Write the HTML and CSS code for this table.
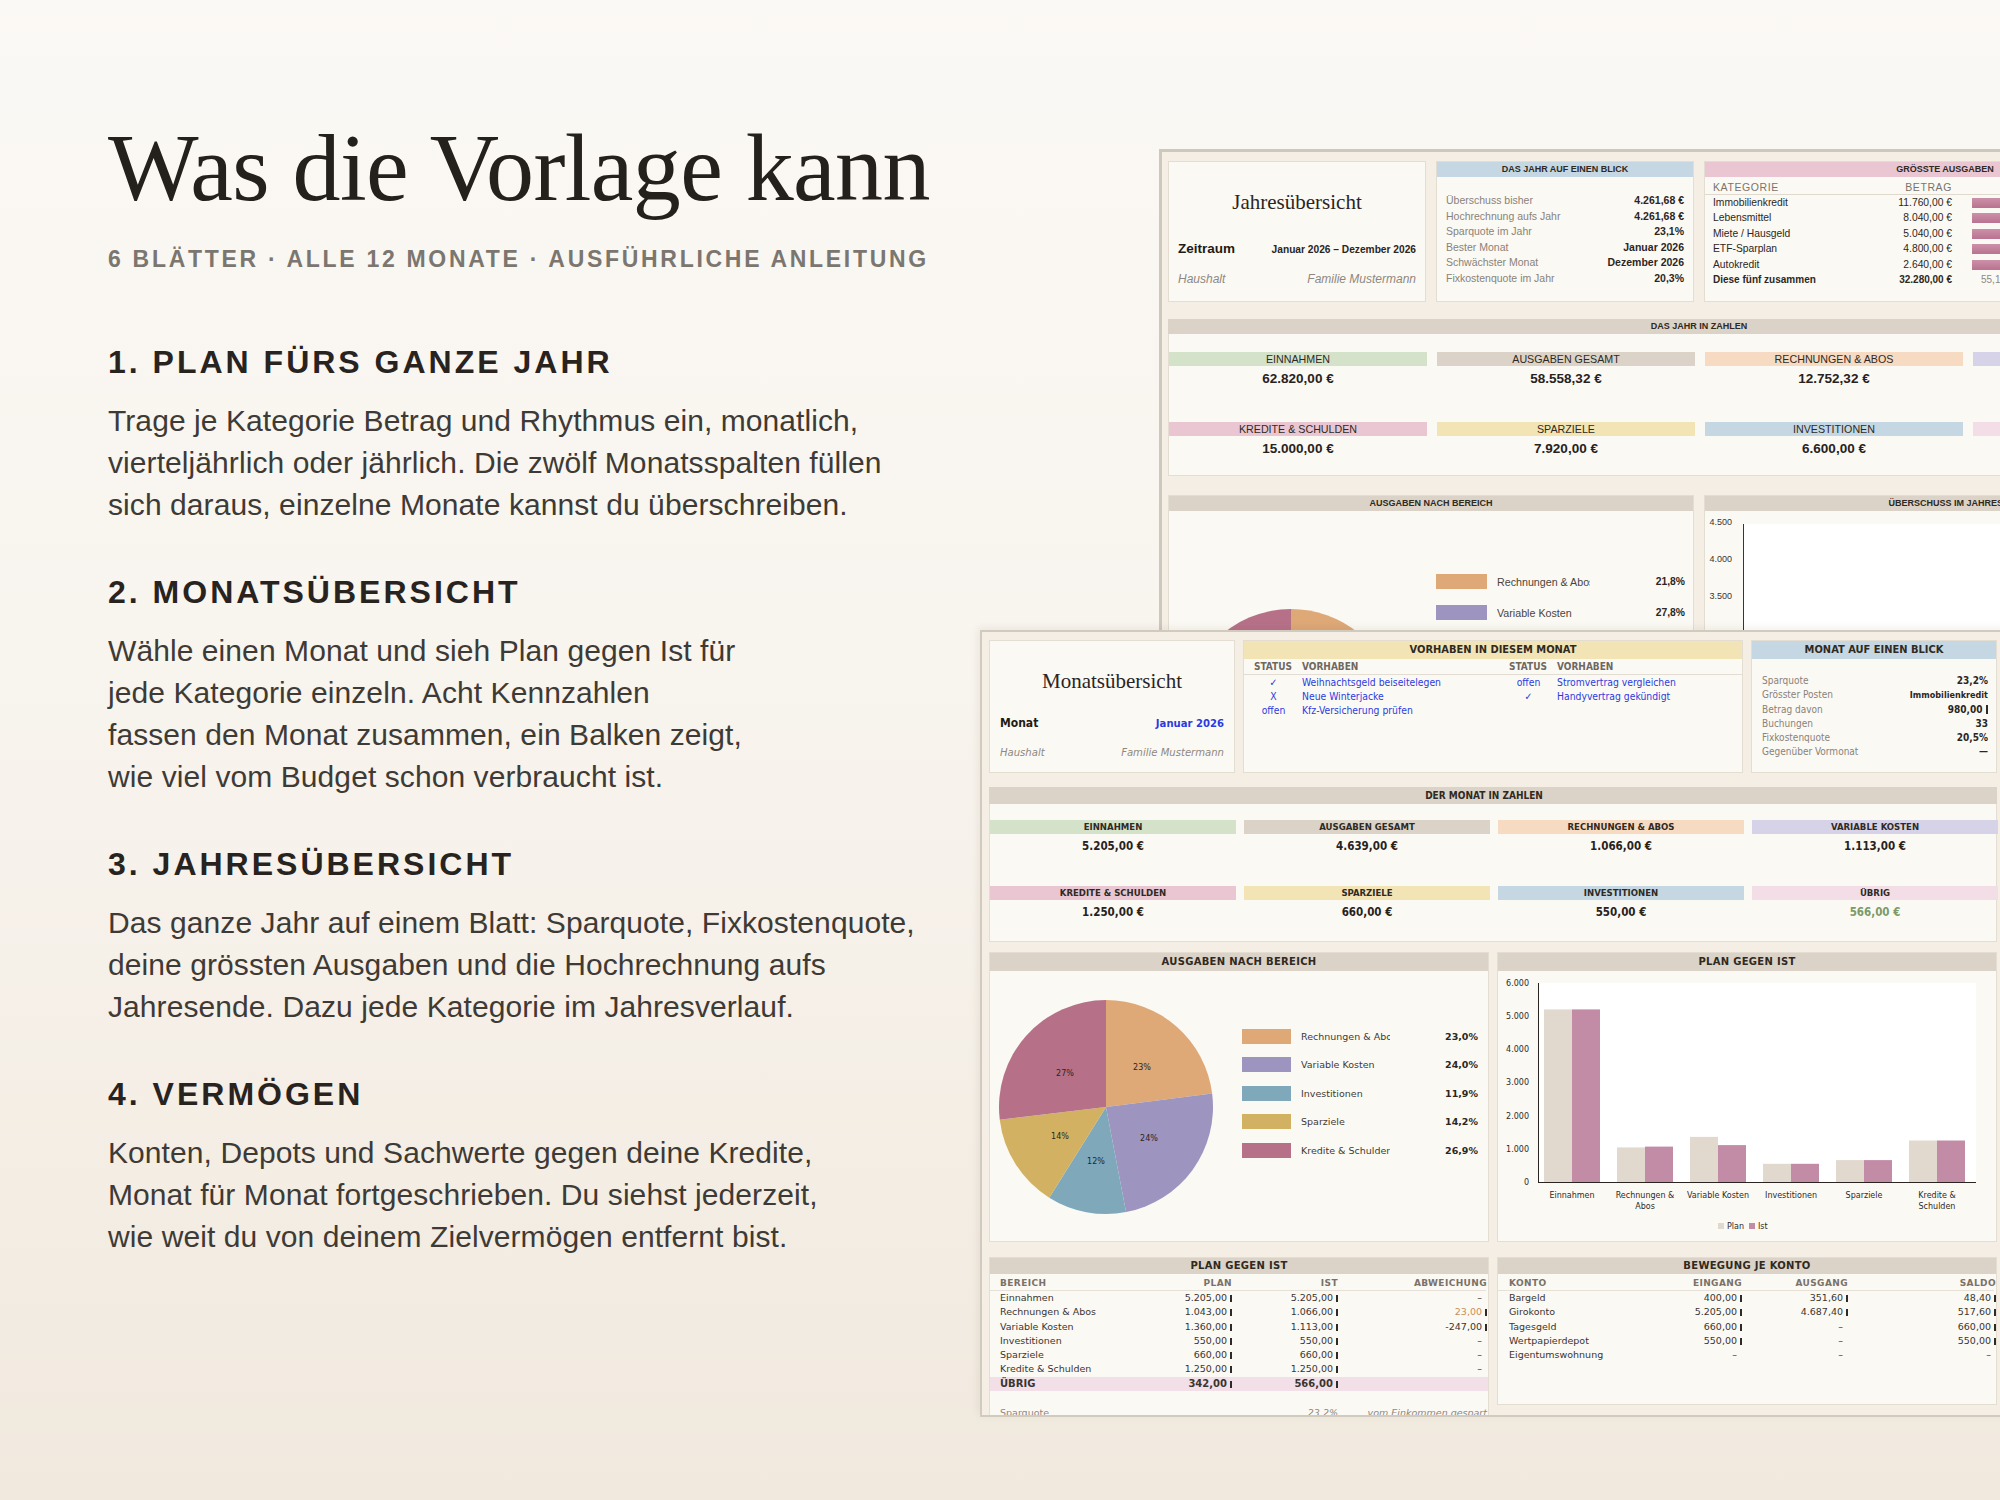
FILE: index.html
```html
<!DOCTYPE html>
<html lang="de">
<head>
<meta charset="utf-8">
<title>Was die Vorlage kann</title>
<link rel="stylesheet" href="styles.css">
</head>
<body>
<div class="page">
  <section class="intro">
    <h1 class="title">Was die Vorlage kann</h1>
    <p class="kicker">6 BLÄTTER · ALLE 12 MONATE · AUSFÜHRLICHE ANLEITUNG</p>
    <div class="feature first">
      <h2>1. PLAN FÜRS GANZE JAHR</h2>
      <p>Trage je Kategorie Betrag und Rhythmus ein, monatlich,<br>vierteljährlich oder jährlich. Die zwölf Monatsspalten füllen<br>sich daraus, einzelne Monate kannst du überschreiben.</p>
    </div>
    <div class="feature">
      <h2>2. MONATSÜBERSICHT</h2>
      <p>Wähle einen Monat und sieh Plan gegen Ist für<br>jede Kategorie einzeln. Acht Kennzahlen<br>fassen den Monat zusammen, ein Balken zeigt,<br>wie viel vom Budget schon verbraucht ist.</p>
    </div>
    <div class="feature">
      <h2>3. JAHRESÜBERSICHT</h2>
      <p>Das ganze Jahr auf einem Blatt: Sparquote, Fixkostenquote,<br>deine grössten Ausgaben und die Hochrechnung aufs<br>Jahresende. Dazu jede Kategorie im Jahresverlauf.</p>
    </div>
    <div class="feature">
      <h2>4. VERMÖGEN</h2>
      <p>Konten, Depots und Sachwerte gegen deine Kredite,<br>Monat für Monat fortgeschrieben. Du siehst jederzeit,<br>wie weit du von deinem Zielvermögen entfernt bist.</p>
    </div>
  </section>

  <!-- Jahresübersicht (back sheet) -->
  <div class="sheet sheet-back">
    <div class="b-top">
      <div class="panel tcard">
        <div class="tname">Jahresübersicht</div>
        <div class="trow main"><span class="tkey">Zeitraum</span><span class="tval">Januar 2026 – Dezember 2026</span></div>
        <div class="trow sub"><span>Haushalt</span><span>Familie Mustermann</span></div>
      </div>
      <div class="panel">
        <div class="phead bh c-blue"><span>DAS JAHR AUF EINEN BLICK</span></div>
        <div class="bkv">
          <div class="kvr"><span>Überschuss bisher</span><b>4.261,68 €</b></div>
          <div class="kvr"><span>Hochrechnung aufs Jahr</span><b>4.261,68 €</b></div>
          <div class="kvr"><span>Sparquote im Jahr</span><b>23,1%</b></div>
          <div class="kvr"><span>Bester Monat</span><b>Januar 2026</b></div>
          <div class="kvr"><span>Schwächster Monat</span><b>Dezember 2026</b></div>
          <div class="kvr"><span>Fixkostenquote im Jahr</span><b>20,3%</b></div>
        </div>
      </div>
      <div class="panel">
        <div class="phead bh c-pink"><span>GRÖSSTE AUSGABEN</span></div>
        <div class="gtab">
          <div class="grow ghead"><span>KATEGORIE</span><span class="r">BETRAG</span><span></span></div>
          <div class="grow"><span>Immobilienkredit</span><span class="r">11.760,00 €</span><span class="gbar"><i class="g1"></i></span></div>
          <div class="grow"><span>Lebensmittel</span><span class="r">8.040,00 €</span><span class="gbar"><i class="g2"></i></span></div>
          <div class="grow"><span>Miete / Hausgeld</span><span class="r">5.040,00 €</span><span class="gbar"><i class="g3"></i></span></div>
          <div class="grow"><span>ETF-Sparplan</span><span class="r">4.800,00 €</span><span class="gbar"><i class="g4"></i></span></div>
          <div class="grow"><span>Autokredit</span><span class="r">2.640,00 €</span><span class="gbar"><i class="g5"></i></span></div>
          <div class="grow total"><span>Diese fünf zusammen</span><span class="r">32.280,00 €</span><span class="gpct">55,1</span></div>
        </div>
      </div>
    </div>

    <div class="b-z">
      <div class="phead bh c-grey"><span>DAS JAHR IN ZAHLEN</span></div>
      <div class="zbody">
        <div class="kpi"><div class="lab c-green"><span>EINNAHMEN</span></div><div class="val"><span>62.820,00 €</span></div></div>
        <div class="kpi"><div class="lab c-grey"><span>AUSGABEN GESAMT</span></div><div class="val"><span>58.558,32 €</span></div></div>
        <div class="kpi"><div class="lab c-peach"><span>RECHNUNGEN &amp; ABOS</span></div><div class="val"><span>12.752,32 €</span></div></div>
        <div class="kpi"><div class="lab c-lav"></div><div class="val"></div></div>
        <div class="kpi"><div class="lab c-pink"><span>KREDITE &amp; SCHULDEN</span></div><div class="val"><span>15.000,00 €</span></div></div>
        <div class="kpi"><div class="lab c-yellow"><span>SPARZIELE</span></div><div class="val"><span>7.920,00 €</span></div></div>
        <div class="kpi"><div class="lab c-blue"><span>INVESTITIONEN</span></div><div class="val"><span>6.600,00 €</span></div></div>
        <div class="kpi"><div class="lab c-rose"></div><div class="val"></div></div>
      </div>
    </div>

    <div class="b-charts">
      <div class="panel">
        <div class="phead bh c-grey"><span>AUSGABEN NACH BEREICH</span></div>
        <div class="bpie-body">
          <svg class="pie" width="230" height="230" viewBox="0 0 230 230">
            <path d="M115 115 L115 8 A107 107 0 0 1 219.85 93.63 Z" fill="#dea877"/>
            <path d="M115 115 L219.85 93.63 A107 107 0 0 1 117.69 221.97 Z" fill="#9d94bf"/>
            <path d="M115 115 L117.69 221.97 A107 107 0 0 1 47.32 197.88 Z" fill="#7fa9bb"/>
            <path d="M115 115 L47.32 197.88 A107 107 0 0 1 8.08 119.03 Z" fill="#d2b262"/>
            <path d="M115 115 L8.08 119.03 A107 107 0 0 1 115 8 Z" fill="#b67189"/>
          </svg>
          <div class="blegend">
            <div class="lrow"><span class="sw s-peach"></span><span class="ltxt">Rechnungen &amp; Abos</span><span class="lpct">21,8%</span></div>
            <div class="lrow"><span class="sw s-lav"></span><span class="ltxt">Variable Kosten</span><span class="lpct">27,8%</span></div>
          </div>
        </div>
      </div>
      <div class="panel">
        <div class="phead bh c-grey"><span>ÜBERSCHUSS IM JAHRESVERLAUF</span></div>
        <svg class="linechart" width="300" height="240" viewBox="0 0 300 240">
          <rect x="39" y="13" width="270" height="230" fill="#ffffff"/>
          <line x1="38.5" y1="13" x2="38.5" y2="240" stroke="#3a3530" stroke-width="1"/>
          <g class="ticks" text-anchor="end">
            <text x="27" y="14">4.500</text>
            <text x="27" y="51">4.000</text>
            <text x="27" y="88">3.500</text>
          </g>
        </svg>
      </div>
    </div>
  </div>

  <!-- Monatsübersicht (front sheet) -->
  <div class="sheet sheet-front">
    <div class="f-top">
      <div class="panel tcard fcard">
        <div class="tname">Monatsübersicht</div>
        <div class="trow main"><span class="tkey">Monat</span><span class="tval blue">Januar 2026</span></div>
        <div class="trow sub"><span>Haushalt</span><span>Familie Mustermann</span></div>
      </div>
      <div class="panel span2">
        <div class="phead fh c-yellow"><span>VORHABEN IN DIESEM MONAT</span></div>
        <div class="vrow vh"><span class="vst">STATUS</span><span>VORHABEN</span><span class="vst">STATUS</span><span>VORHABEN</span></div>
        <div class="vrow"><span class="vst c">✓</span><span>Weihnachtsgeld beiseitelegen</span><span class="vst c">offen</span><span>Stromvertrag vergleichen</span></div>
        <div class="vrow"><span class="vst c">X</span><span>Neue Winterjacke</span><span class="vst c">✓</span><span>Handyvertrag gekündigt</span></div>
        <div class="vrow"><span class="vst c">offen</span><span>Kfz-Versicherung prüfen</span><span></span><span></span></div>
      </div>
      <div class="panel">
        <div class="phead fh c-blue"><span>MONAT AUF EINEN BLICK</span></div>
        <div class="fkv">
          <div class="kvr"><span>Sparquote</span><b>23,2%</b></div>
          <div class="kvr"><span>Grösster Posten</span><b class="small">Immobilienkredit</b></div>
          <div class="kvr"><span>Betrag davon</span><b>980,00<i class="eur"></i></b></div>
          <div class="kvr"><span>Buchungen</span><b>33</b></div>
          <div class="kvr"><span>Fixkostenquote</span><b>20,5%</b></div>
          <div class="kvr"><span>Gegenüber Vormonat</span><b>—</b></div>
        </div>
      </div>
    </div>

    <div class="f-z">
      <div class="phead fzh c-grey"><span>DER MONAT IN ZAHLEN</span></div>
      <div class="zbody fz">
        <div class="kpi"><div class="lab c-green"><span>EINNAHMEN</span></div><div class="val"><span>5.205,00 €</span></div></div>
        <div class="kpi"><div class="lab c-grey"><span>AUSGABEN GESAMT</span></div><div class="val"><span>4.639,00 €</span></div></div>
        <div class="kpi"><div class="lab c-peach"><span>RECHNUNGEN &amp; ABOS</span></div><div class="val"><span>1.066,00 €</span></div></div>
        <div class="kpi"><div class="lab c-lav"><span>VARIABLE KOSTEN</span></div><div class="val"><span>1.113,00 €</span></div></div>
        <div class="kpi"><div class="lab c-pink"><span>KREDITE &amp; SCHULDEN</span></div><div class="val"><span>1.250,00 €</span></div></div>
        <div class="kpi"><div class="lab c-yellow"><span>SPARZIELE</span></div><div class="val"><span>660,00 €</span></div></div>
        <div class="kpi"><div class="lab c-blue"><span>INVESTITIONEN</span></div><div class="val"><span>550,00 €</span></div></div>
        <div class="kpi"><div class="lab c-rose"><span>ÜBRIG</span></div><div class="val green"><span>566,00 €</span></div></div>
      </div>
    </div>

    <div class="f-charts">
      <div class="panel">
        <div class="phead ch c-grey">AUSGABEN NACH BEREICH</div>
        <div class="fpie-body">
          <svg class="pie" width="230" height="230" viewBox="0 0 230 230">
            <path d="M115 115 L115 8 A107 107 0 0 1 221.16 101.59 Z" fill="#dea877"/>
            <path d="M115 115 L221.16 101.59 A107 107 0 0 1 135.05 220.11 Z" fill="#9d94bf"/>
            <path d="M115 115 L135.05 220.11 A107 107 0 0 1 58.24 205.70 Z" fill="#7fa9bb"/>
            <path d="M115 115 L58.24 205.70 A107 107 0 0 1 8.76 127.74 Z" fill="#d2b262"/>
            <path d="M115 115 L8.76 127.74 A107 107 0 0 1 115 8 Z" fill="#b67189"/>
            <g class="pielabels" text-anchor="middle">
              <text x="151" y="78">23%</text>
              <text x="158" y="149">24%</text>
              <text x="105" y="172">12%</text>
              <text x="69" y="147">14%</text>
              <text x="74" y="84">27%</text>
            </g>
          </svg>
          <div class="flegend">
            <div class="lrow"><span class="sw s-peach"></span><span class="ltxt">Rechnungen &amp; Abos</span><span class="lpct">23,0%</span></div>
            <div class="lrow"><span class="sw s-lav"></span><span class="ltxt">Variable Kosten</span><span class="lpct">24,0%</span></div>
            <div class="lrow"><span class="sw s-blue"></span><span class="ltxt">Investitionen</span><span class="lpct">11,9%</span></div>
            <div class="lrow"><span class="sw s-yellow"></span><span class="ltxt">Sparziele</span><span class="lpct">14,2%</span></div>
            <div class="lrow"><span class="sw s-pink"></span><span class="ltxt">Kredite &amp; Schulden</span><span class="lpct">26,9%</span></div>
          </div>
        </div>
      </div>
      <div class="panel">
        <div class="phead ch c-grey">PLAN GEGEN IST</div>
        <svg class="barchart" width="498" height="271" viewBox="0 0 498 271">
          <rect x="40" y="12" width="438" height="199" fill="#ffffff"/>
          <g class="ticks" text-anchor="end">
            <text x="31" y="15">6.000</text>
            <text x="31" y="48">5.000</text>
            <text x="31" y="81">4.000</text>
            <text x="31" y="114">3.000</text>
            <text x="31" y="148">2.000</text>
            <text x="31" y="181">1.000</text>
            <text x="31" y="214">0</text>
          </g>
          <g class="plan">
            <rect x="46" y="38.4" width="28" height="172.6"/>
            <rect x="119" y="176.4" width="28" height="34.6"/>
            <rect x="192" y="165.9" width="28" height="45.1"/>
            <rect x="265" y="192.8" width="28" height="18.2"/>
            <rect x="338" y="189.1" width="28" height="21.9"/>
            <rect x="411" y="169.5" width="28" height="41.5"/>
          </g>
          <g class="ist">
            <rect x="74" y="38.4" width="28" height="172.6"/>
            <rect x="147" y="175.6" width="28" height="35.4"/>
            <rect x="220" y="174.1" width="28" height="36.9"/>
            <rect x="293" y="192.8" width="28" height="18.2"/>
            <rect x="366" y="189.1" width="28" height="21.9"/>
            <rect x="439" y="169.5" width="28" height="41.5"/>
          </g>
          <line x1="40.5" y1="12" x2="40.5" y2="211.5" stroke="#2a2520" stroke-width="1"/>
          <line x1="40" y1="211.5" x2="478" y2="211.5" stroke="#2a2520" stroke-width="1"/>
          <g class="cats" text-anchor="middle">
            <text x="74" y="227">Einnahmen</text>
            <text x="147" y="227">Rechnungen &amp;</text>
            <text x="147" y="238">Abos</text>
            <text x="220" y="227">Variable Kosten</text>
            <text x="293" y="227">Investitionen</text>
            <text x="366" y="227">Sparziele</text>
            <text x="439" y="227">Kredite &amp;</text>
            <text x="439" y="238">Schulden</text>
          </g>
          <rect x="220" y="252" width="6" height="6" fill="#e1d9cd"/>
          <text class="leg" x="229" y="258">Plan</text>
          <rect x="251" y="252" width="6" height="6" fill="#c28ba6"/>
          <text class="leg" x="260" y="258">Ist</text>
        </svg>
      </div>
    </div>

    <div class="f-tables">
      <div class="panel tpanel">
        <div class="phead th c-grey">PLAN GEGEN IST</div>
        <div class="ttab plan-t">
          <div class="tr thd"><span>BEREICH</span><span>PLAN</span><span>IST</span><span>ABWEICHUNG</span></div>
          <div class="tr"><span>Einnahmen</span><span>5.205,00<i class="eur"></i></span><span>5.205,00<i class="eur"></i></span><span>–<i class="eur gap"></i></span></div>
          <div class="tr"><span>Rechnungen &amp; Abos</span><span>1.043,00<i class="eur"></i></span><span>1.066,00<i class="eur"></i></span><span class="orange">23,00<i class="eur"></i></span></div>
          <div class="tr"><span>Variable Kosten</span><span>1.360,00<i class="eur"></i></span><span>1.113,00<i class="eur"></i></span><span>-247,00<i class="eur"></i></span></div>
          <div class="tr"><span>Investitionen</span><span>550,00<i class="eur"></i></span><span>550,00<i class="eur"></i></span><span>–<i class="eur gap"></i></span></div>
          <div class="tr"><span>Sparziele</span><span>660,00<i class="eur"></i></span><span>660,00<i class="eur"></i></span><span>–<i class="eur gap"></i></span></div>
          <div class="tr"><span>Kredite &amp; Schulden</span><span>1.250,00<i class="eur"></i></span><span>1.250,00<i class="eur"></i></span><span>–<i class="eur gap"></i></span></div>
          <div class="tr total"><span>ÜBRIG</span><span>342,00<i class="eur"></i></span><span>566,00<i class="eur"></i></span><span></span></div>
          <div class="tspacer"></div>
          <div class="tr note"><span>Sparquote</span><span></span><span class="it">23,2%</span><span class="it">vom Einkommen gespart</span></div>
        </div>
      </div>
      <div class="panel tpanel konto">
        <div class="phead th c-grey">BEWEGUNG JE KONTO</div>
        <div class="ttab konto-t">
          <div class="tr thd"><span>KONTO</span><span>EINGANG</span><span>AUSGANG</span><span>SALDO</span></div>
          <div class="tr"><span>Bargeld</span><span>400,00<i class="eur"></i></span><span>351,60<i class="eur"></i></span><span>48,40<i class="eur"></i></span></div>
          <div class="tr"><span>Girokonto</span><span>5.205,00<i class="eur"></i></span><span>4.687,40<i class="eur"></i></span><span>517,60<i class="eur"></i></span></div>
          <div class="tr"><span>Tagesgeld</span><span>660,00<i class="eur"></i></span><span>–<i class="eur gap"></i></span><span>660,00<i class="eur"></i></span></div>
          <div class="tr"><span>Wertpapierdepot</span><span>550,00<i class="eur"></i></span><span>–<i class="eur gap"></i></span><span>550,00<i class="eur"></i></span></div>
          <div class="tr"><span>Eigentumswohnung</span><span>–<i class="eur gap"></i></span><span>–<i class="eur gap"></i></span><span>–<i class="eur gap"></i></span></div>
        </div>
      </div>
    </div>
  </div>
</div>
</body>
</html>
```

FILE: styles.css
```css
:root {
  --arial: "Liberation Sans", Arial, sans-serif;
  --tahoma: "DejaVu Sans Condensed", "DejaVu Sans", sans-serif;
  --tab: "DejaVu Sans", Verdana, sans-serif;
}

* { box-sizing: border-box; margin: 0; padding: 0; }

body {
  margin: 0;
  background: linear-gradient(180deg, #fbf9f5 0%, #f8f4ee 45%, #f1e9de 100%);
  font-family: "Liberation Sans", Arial, sans-serif;
}

.page {
  position: relative;
  width: 2000px;
  height: 1500px;
  overflow: hidden;
}

/* ---------- intro column ---------- */
.intro {
  padding: 120px 0 0 108px;
  width: 960px;
}
.title {
  font-family: "Liberation Serif", "Times New Roman", serif;
  font-weight: normal;
  font-size: 96px;
  line-height: 96px;
  letter-spacing: -0.6px;
  color: #24201b;
}
.kicker {
  margin-top: 29px;
  font-size: 23px;
  line-height: 28px;
  font-weight: bold;
  letter-spacing: 2.7px;
  color: #7b766f;
}
.feature h2 {
  margin-top: 47px;
  font-size: 32px;
  line-height: 38px;
  letter-spacing: 3px;
  font-weight: bold;
  color: #28231e;
}
.feature.first h2 { margin-top: 70px; }
.feature p {
  margin-top: 19px;
  font-size: 30px;
  line-height: 42px;
  letter-spacing: 0.08px;
  color: #3e3a35;
}

/* ---------- sheets ---------- */
.sheet {
  position: absolute;
  overflow: hidden;
  background: #f4eee5;
  font-family: var(--arial);
  color: #2c2722;
}
.sheet-back {
  left: 1159px;
  top: 149px;
  width: 1000px;
  height: 560px;
  border-left: 3px solid #cec7bc;
  border-top: 3px solid #cec7bc;
  padding: 9px 0 0 6px;
}
.sheet-front {
  left: 980px;
  top: 630px;
  width: 1040px;
  height: 787px;
  border: 2px solid #d1cabf;
  padding: 8px 0 0 7px;
  box-shadow: -2px -2px 8px rgba(80, 60, 30, 0.08);
}

.panel {
  background: #fbf9f4;
  border: 1px solid #e3ddd2;
  overflow: hidden;
}
.phead {
  text-align: center;
  color: #2f2922;
  white-space: nowrap;
  overflow: hidden;
}
.bh { height: 15px; line-height: 15px; font-size: 9px; font-weight: bold; }
.fh { height: 18px; line-height: 18px; font-family: var(--tahoma); font-size: 11px; font-weight: bold; }
.fzh { height: 17px; line-height: 17px; font-family: var(--tahoma); font-size: 10px; font-weight: bold; padding-right: 18px; }
.ch { height: 18px; line-height: 18px; font-family: var(--tab); font-weight: bold; font-size: 10px; letter-spacing: 0.3px; }
.th { height: 16px; line-height: 16px; font-family: var(--tab); font-weight: bold; font-size: 10px; letter-spacing: 0.3px; }

.c-green { background: #d3e2c9; }
.c-grey { background: #dbd3c7; }
.c-peach { background: #f6dac1; }
.c-lav { background: #d6d3e8; }
.c-pink { background: #e9c6d1; }
.c-yellow { background: #f2e4b4; }
.c-blue { background: #c4d7e3; }
.c-rose { background: #f3dee7; }

/* title cards */
.tcard { padding: 0 9px; }
.tname {
  font-family: "Liberation Serif", "Times New Roman", serif;
  font-size: 21px;
  line-height: 24px;
  text-align: center;
  margin-top: 28px;
  color: #2a251f;
}
.trow { display: flex; justify-content: space-between; align-items: baseline; white-space: nowrap; }
.trow.main { margin-top: 26px; line-height: 18px; }
.tkey { font-weight: bold; font-size: 13.5px; color: #1f1b17; }
.tval { font-weight: bold; font-size: 10.2px; color: #2a251f; }
.trow.sub {
  margin-top: 12px;
  line-height: 16px;
  font-style: italic;
  color: #8f887f;
  font-size: 12px;
}
.fcard { padding: 0 10px; font-family: var(--tahoma); }
.fcard .trow.main { margin-top: 21px; }
.fcard .tkey { font-size: 12px; }
.fcard .tval.blue { color: #2b3be0; font-size: 11.2px; }
.fcard .trow.sub { font-size: 11.2px; }

/* back top */
.b-top {
  display: grid;
  grid-template-columns: 258px 258px 482px;
  column-gap: 10px;
  height: 141px;
}
.bkv { padding: 16px 9px 0; }
.kvr { display: flex; justify-content: space-between; line-height: 15.6px; font-size: 10.5px; white-space: nowrap; }
.kvr > span { color: #8a8278; }
.kvr > b { color: #2b261f; }

.gtab { padding: 3px 0 0 8px; }
.grow {
  display: grid;
  grid-template-columns: 124px 101px 1fr;
  column-gap: 14px;
  line-height: 15.4px;
  font-size: 10.3px;
  white-space: nowrap;
}
.ghead {
  line-height: 14px;
  color: #7b736a;
  border-bottom: 1px solid #e0d9ce;
  letter-spacing: 0.6px;
  font-size: 10.5px;
  margin-left: -8px;
  padding-left: 8px;
}
.r { text-align: right; }
.gbar i { display: block; height: 10px; margin: 3px 0 0 6px; background: linear-gradient(#cc90a9, #b87390); }
.g1 { width: 120px; }
.g2 { width: 82px; }
.g3 { width: 51px; }
.g4 { width: 49px; }
.g5 { width: 28px; }
.total { font-weight: bold; font-size: 10px; }
.gpct { color: #8f887f; font-weight: normal; padding-left: 15px; }

/* back section */
.b-z { margin-top: 17px; width: 1062px; }
.zbody {
  background: #fbf9f4;
  border: 1px solid #e3ddd2;
  border-top: none;
  display: grid;
  grid-template-columns: repeat(4, 258px);
  column-gap: 10px;
  row-gap: 30px;
  padding: 18px 0 13px;
}
.kpi .lab {
  height: 14px;
  line-height: 14px;
  text-align: center;
  font-size: 10.7px;
  color: #2f2a24;
  white-space: nowrap;
}
.kpi .val {
  height: 26px;
  line-height: 26px;
  text-align: center;
  font-weight: bold;
  font-size: 13.5px;
  color: #27221d;
}
.kpi .val.green { color: #7b9a6a; }

.b-charts {
  margin-top: 19px;
  display: grid;
  grid-template-columns: 526px 526px;
  column-gap: 10px;
  height: 300px;
}
.bpie-body { display: flex; align-items: flex-start; padding-left: 7px; }
.bpie-body .pie { margin-top: 90px; flex: none; }
.blegend { margin-left: 30px; margin-top: 55px; width: 249px; flex: none; }
.lrow { display: flex; align-items: center; height: 31px; white-space: nowrap; }
.sw { display: block; width: 51px; height: 15px; flex: none; }
.s-peach { background: #dea877; }
.s-lav { background: #9d94bf; }
.s-blue { background: #7fa9bb; }
.s-yellow { background: #d2b262; }
.s-pink { background: #b67189; }
.blegend .ltxt { margin-left: 10px; width: 93px; overflow: hidden; font-size: 10.7px; color: #4a443d; }
.blegend .lpct { margin-left: auto; font-weight: bold; font-size: 10.3px; }

.linechart { display: block; }
.linechart .ticks text { font-family: var(--arial); font-size: 9px; fill: #3a3530; }

/* front */
.f-top {
  display: grid;
  grid-template-columns: repeat(4, 246px);
  column-gap: 8px;
  height: 133px;
}
.span2 { grid-column: span 2; }
.vrow {
  display: grid;
  grid-template-columns: 48px 207px 48px 1fr;
  padding-left: 10px;
  line-height: 14px;
  font-family: var(--tahoma);
  font-size: 10.3px;
  color: #2b3be0;
  white-space: nowrap;
}
.vrow.vh {
  margin-top: 1px;
  color: #6f685f;
  font-weight: bold;
  font-size: 10px;
  border-bottom: 1px solid #e2dcd2;
}
.vrow > .vst { width: 39px; overflow: hidden; }
.vrow > .vst.c { text-align: center; }
.fkv { padding: 15px 8px 0 10px; font-family: var(--tahoma); }
.fkv .kvr { line-height: 14.3px; font-size: 10px; }
.fkv b.small { font-size: 9px; }

.eur {
  display: inline-block;
  width: 2px;
  height: 7px;
  background: #2f2a25;
  margin-left: 3px;
  vertical-align: -1px;
}
.kvr .eur { width: 2.5px; height: 9px; }
.eur.gap { visibility: hidden; }

.f-z { margin-top: 14px; width: 1008px; }
.zbody.fz {
  grid-template-columns: repeat(4, 246px);
  column-gap: 8px;
  row-gap: 28px;
  padding: 16px 0 17px;
  font-family: var(--tahoma);
}
.fz .kpi .lab { font-size: 9.5px; font-weight: bold; }
.fz .kpi .val { height: 24px; line-height: 24px; font-size: 11.5px; }

.f-charts {
  margin-top: 10px;
  display: grid;
  grid-template-columns: 500px 500px;
  column-gap: 8px;
  height: 290px;
}
.fpie-body { display: flex; align-items: flex-start; padding: 21px 0 0 1px; }
.fpie-body .pie { flex: none; }
.pielabels text { font-family: var(--tab); font-size: 8px; fill: #2b2620; }
.flegend { margin-left: 21px; margin-top: 30px; width: 236px; flex: none; font-family: var(--tab); }
.flegend .lrow { height: 28.5px; }
.flegend .sw { width: 49px; }
.flegend .ltxt { margin-left: 10px; width: 89px; overflow: hidden; font-size: 9.5px; color: #3f3a34; }
.flegend .lpct { margin-left: auto; font-weight: bold; font-size: 9.5px; }

.barchart { display: block; }
.barchart text { font-family: var(--tab); font-size: 8px; fill: #2f2a25; }
.barchart .plan rect { fill: #e1d9cd; }
.barchart .ist rect { fill: #c28ba6; }

.f-tables {
  margin-top: 15px;
  display: grid;
  grid-template-columns: 500px 500px;
  column-gap: 8px;
  align-items: start;
}
.tpanel { height: 175px; }
.tpanel.konto { height: 148px; }
.ttab { padding: 2px 2px 0 10px; font-family: var(--tab); font-size: 9.5px; color: #3a3530; }
.konto-t { padding-left: 11px; }
.tr {
  display: grid;
  grid-template-columns: 130px 102px 106px 149px;
  line-height: 14.3px;
  white-space: nowrap;
}
.konto-t .tr { grid-template-columns: 132px 101px 106px 148px; }
.tr span:not(:first-child) { text-align: right; }
.thd {
  line-height: 14px;
  font-weight: bold;
  font-size: 9px;
  color: #7a7268;
  letter-spacing: 0.4px;
  border-bottom: 1px solid #e6e0d6;
  margin-left: -11px;
  padding-left: 11px;
}
.tr.total {
  background: #f3dfe8;
  font-weight: bold;
  margin: 0 -2px 0 -10px;
  padding: 0 2px 0 10px;
}
.orange { color: #c8905a; }
.tspacer { height: 15px; }
.tr.note { color: #8e877e; }
.tr.note .it { font-style: italic; }
```
